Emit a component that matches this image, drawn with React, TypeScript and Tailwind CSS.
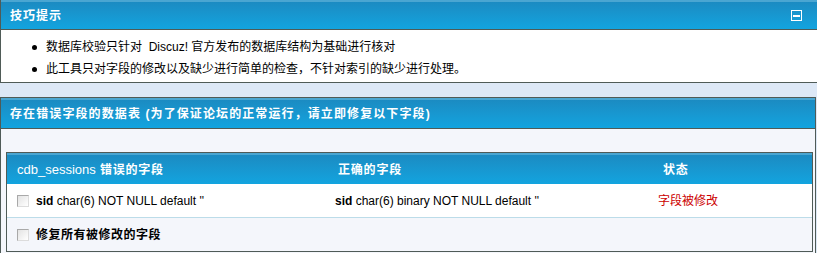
import React from "react";

const font = { fontFamily: '"Liberation Sans", Arial, "Noto Sans CJK SC", sans-serif' };

function Check() {
  return (
    <span className="inline-block w-[12px] h-[12px] border border-[#a9a9a9] border-b-[#dcdcdc] border-r-[#dcdcdc] bg-gradient-to-br from-[#e3e3e3] to-white shrink-0" />
  );
}

export default function App() {
  return (
    <div className="w-[817px] h-[253px] overflow-hidden bg-[#dde8f6] text-[12px] text-black" style={font}>
      {/* tips table */}
      <div className="border-l border-b border-[#4f5b57] bg-white">
        <div className="h-[30px] bg-gradient-to-b from-[#1b8bc2] to-[#12a4df] border-t-2 border-[#4aa6d2] border-b border-b-[#4f5b57] flex items-center justify-between pl-[9px] pr-[15px]">
          <span className="text-white font-bold text-[12px] tracking-[1px]">技巧提示</span>
          <span className="w-[11px] h-[11px] border border-white flex items-center justify-center">
            <span className="w-[7px] h-[2px] bg-white" />
          </span>
        </div>
        <ul className="pl-[31px] pt-[6px] h-[52px]">
          <li className="flex items-center h-[22px]">
            <span className="w-[5px] h-[5px] rounded-full bg-black mr-[9px]" />
            <span>数据库校验只针对&nbsp; Discuz! 官方发布的数据库结构为基础进行核对</span>
          </li>
          <li className="flex items-center h-[22px]">
            <span className="w-[5px] h-[5px] rounded-full bg-black mr-[9px]" />
            <span>此工具只对字段的修改以及缺少进行简单的检查，不针对索引的缺少进行处理。</span>
          </li>
        </ul>
      </div>
      <div className="h-[14px]" />
      {/* error table */}
      <div className="border-t border-l border-r border-[#4f5b57] bg-[#f4f6fb] mr-[1px] h-[160px]">
        <div className="h-[31px] bg-gradient-to-b from-[#1b8bc2] to-[#12a4df] border-t-2 border-[#4aa6d2] border-b border-b-[#4f5b57] flex items-center pl-[9px]">
          <span className="text-white font-bold text-[12px] tracking-[1.1px]">存在错误字段的数据表 (为了保证论坛的正常运行，请立即修复以下字段)</span>
        </div>
        <div className="pt-[23px] pl-[5px] pr-[2px]">
          <div className="border border-[#4f5b57]">
            <div className="h-[31px] grid grid-cols-[318px_323px_1fr] items-center bg-gradient-to-b from-[#1b8bc2] to-[#12a4df] border-t-2 border-[#4aa6d2] text-white font-bold tracking-[0.8px]">
              <span className="pl-[10px]"><span className="font-normal tracking-normal text-[13px]">cdb_sessions</span> 错误的字段</span>
              <span className="pl-[13px]">正确的字段</span>
              <span className="pl-[15px]">状态</span>
            </div>
            <div className="h-[34px] grid grid-cols-[318px_323px_1fr] items-center bg-white border-b border-[#bcdce9]">
              <span className="pl-[10px] flex items-center gap-[7px]">
                <Check />
                <span><b>sid</b> char(6) NOT NULL default ''</span>
              </span>
              <span className="pl-[10px]"><b>sid</b> char(6) binary NOT NULL default ''</span>
              <span className="pl-[10px] text-[#cc0000]">字段被修改</span>
            </div>
            <div className="h-[33px] flex items-center pl-[10px] gap-[7px] bg-[#f4f6fb]">
              <Check />
              <b className="tracking-[0.5px]">修复所有被修改的字段</b>
            </div>
          </div>
        </div>
      </div>
    </div>
  );
}
